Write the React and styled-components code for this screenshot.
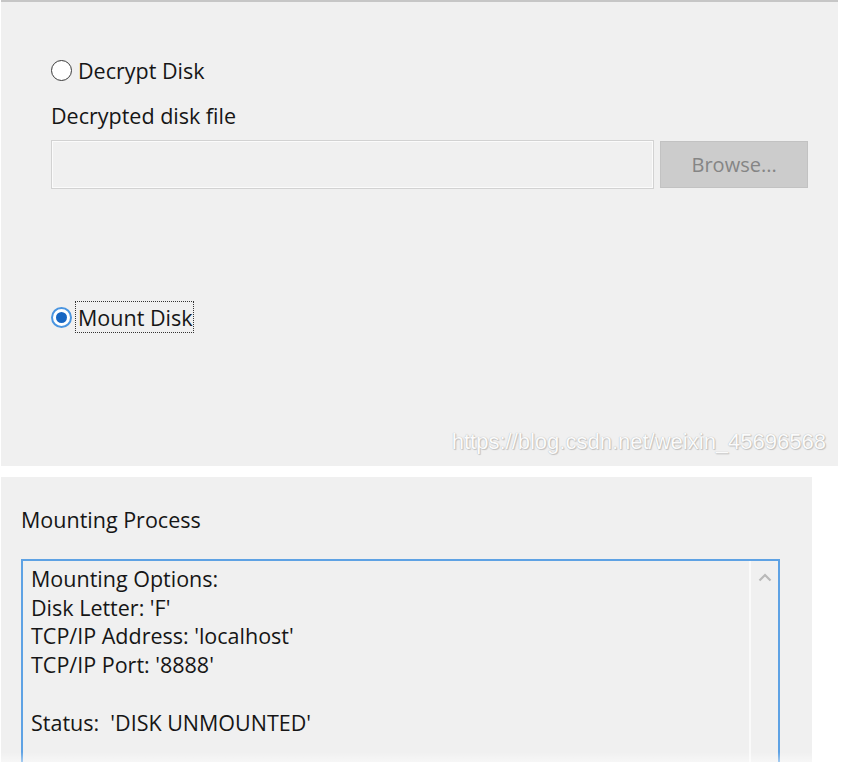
import React from 'react';
import styled, { createGlobalStyle } from 'styled-components';

const GlobalStyle = createGlobalStyle`
	html, body {
		margin: 0;
		padding: 0;
		background: #ffffff;
	}
	body {
		font-family: "Open Sans", "Noto Sans", sans-serif;
		color: #161616;
	}
`;

const Page = styled.div`
	display: flex;
	flex-direction: column;
	gap: 11px;
	padding-left: 1px;
	height: 762px;
	overflow: hidden;
`;

const DiskPanel = styled.section`
	width: 837px;
	height: 466px;
	background: #f0f0f0;
	border-top: 2px solid #c6c6c6;
	padding: 54px 30px 0 50px;
	box-sizing: border-box;
	display: flex;
	flex-direction: column;
`;

const RadioRow = styled.label`
	display: flex;
	align-items: center;
	gap: 3px;
	height: 28px;
	font-size: 21.5px;
	margin-top: ${p => p.$offset || 0}px;
`;

const RadioDot = styled.span`
	flex: none;
	width: 21px;
	height: 21px;
	border-radius: 50%;
	box-sizing: border-box;
	border: ${p => (p.$checked ? '2px solid #4a95e0' : '1.5px solid #3a3a3a')};
	background: #ffffff;
	display: flex;
	align-items: center;
	justify-content: center;
	&::after {
		content: '';
		display: ${p => (p.$checked ? 'block' : 'none')};
		width: 11px;
		height: 11px;
		border-radius: 50%;
		background: #1766c2;
	}
`;

const RadioText = styled.span`
	padding: 2px 1px 1px 2px;
	border: 1px dotted ${p => (p.$focused ? '#333' : 'transparent')};
	line-height: 27px;
`;

const FieldLabel = styled.div`
	font-size: 21.5px;
	line-height: 28px;
	margin-top: 18px;
`;

const FileRow = styled.div`
	display: flex;
	align-items: center;
	gap: 6px;
	margin-top: 10px;
`;

const PathInput = styled.div`
	width: 604px;
	height: 49px;
	box-sizing: border-box;
	border: 1px solid #d2d2d2;
	box-shadow: inset 0 0 0 1px #fbfbfb;
	background: #f0f0f0;
`;

const BrowseButton = styled.div`
	width: 148px;
	height: 47px;
	box-sizing: border-box;
	background: #cccccc;
	border: 1px solid #c2c2c2;
	color: #858585;
	font-size: 20px;
	display: flex;
	align-items: center;
	justify-content: center;
`;

const Watermark = styled.div`
	margin-top: auto;
	margin-bottom: 12px;
	align-self: flex-end;
	margin-right: -18px;
	font-family: "Liberation Sans", Arial, sans-serif;
	font-size: 22px;
	line-height: 24px;
	color: #fbfbfb;
	text-shadow: 0 0 1px #a8a8a8, 1px 1px 1px #c4c4c4;
`;

const ProcessPanel = styled.section`
	width: 811px;
	height: 285px;
	background: #f0f0f0;
	padding: 29px 0 0 20px;
	box-sizing: border-box;
	position: relative;
	overflow: hidden;
	&::after {
		content: '';
		position: absolute;
		left: 0;
		right: 0;
		bottom: 0;
		height: 10px;
		background: linear-gradient(to bottom, rgba(255,255,255,0), rgba(255,255,255,0.45));
	}
`;

const ProcessTitle = styled.div`
	font-size: 21.5px;
	line-height: 28px;
`;

const LogBox = styled.div`
	margin-top: 25px;
	width: 759px;
	height: 240px;
	box-sizing: border-box;
	border: 2px solid #5ea2e4;
	border-bottom: none;
	display: flex;
	background: #f0f0f0;
`;

const LogText = styled.pre`
	flex: 1;
	margin: 0;
	padding: 4px 8px;
	font-family: "Open Sans", "Noto Sans", sans-serif;
	font-size: 21.5px;
	line-height: 28.7px;
	white-space: pre;
`;

const ScrollTrack = styled.div`
	width: 29px;
	border-left: 2px solid #fafafa;
	display: flex;
	justify-content: center;
	padding-top: 12px;
	box-sizing: border-box;
`;

const Chevron = () => (
	<svg width="14" height="9" viewBox="0 0 14 9">
		<path d="M1.5 7.5 L7 2 L12.5 7.5" fill="none" stroke="#b9b9b9" strokeWidth="2.2" />
	</svg>
);

const logLines = [
	'Mounting Options:',
	"Disk Letter: 'F'",
	"TCP/IP Address: 'localhost'",
	"TCP/IP Port: '8888'",
	'',
	"Status:  'DISK UNMOUNTED'",
];

const App = () => (
	<>
		<GlobalStyle />
		<Page>
			<DiskPanel>
				<RadioRow>
					<RadioDot />
					<RadioText>Decrypt Disk</RadioText>
				</RadioRow>
				<FieldLabel>Decrypted disk file</FieldLabel>
				<FileRow>
					<PathInput />
					<BrowseButton>Browse...</BrowseButton>
				</FileRow>
				<RadioRow $offset={114}>
					<RadioDot $checked />
					<RadioText $focused>Mount Disk</RadioText>
				</RadioRow>
				<Watermark>https://blog.csdn.net/weixin_45696568</Watermark>
			</DiskPanel>
			<ProcessPanel>
				<ProcessTitle>Mounting Process</ProcessTitle>
				<LogBox>
					<LogText>{logLines.join('\n')}</LogText>
					<ScrollTrack>
						<Chevron />
					</ScrollTrack>
				</LogBox>
			</ProcessPanel>
		</Page>
	</>
);

export default App;
